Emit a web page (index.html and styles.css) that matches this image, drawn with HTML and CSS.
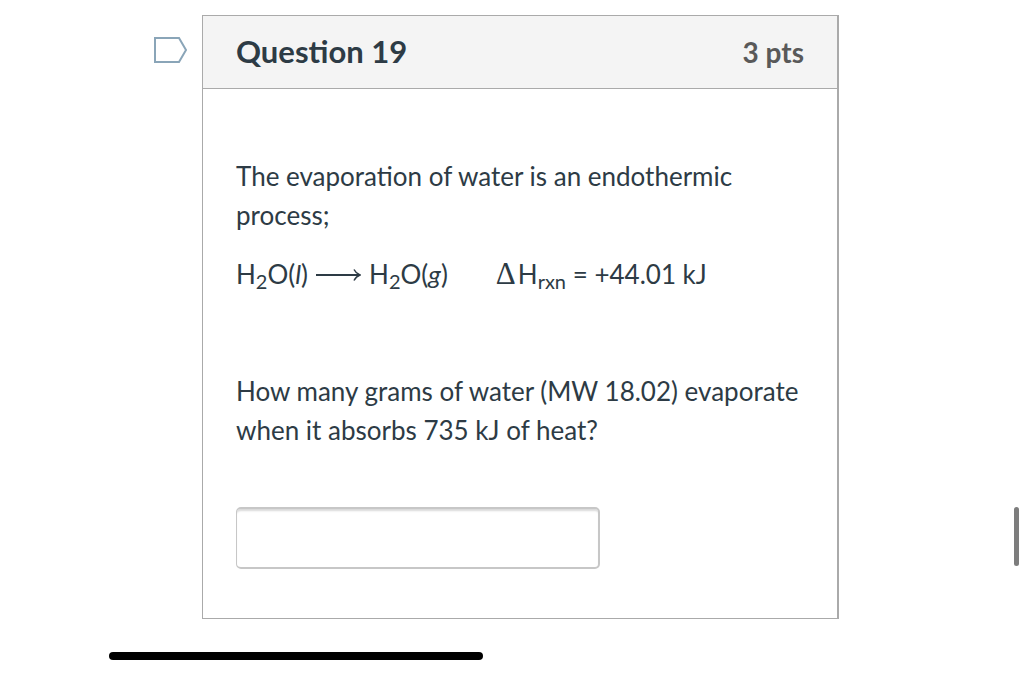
FILE: index.html
```html
<!DOCTYPE html>
<html lang="en">
<head>
  <meta charset="UTF-8" />
  <meta name="viewport" content="width=device-width, initial-scale=1" />
  <title>Question 19</title>
  <link rel="stylesheet" href="styles.css">
</head>
<body>

  <main class="quiz">
    <button class="flag" type="button" aria-label="Flag question">
      <svg width="34" height="28" viewBox="0 0 34 28" fill="none" stroke-width="2">
        <path d="M1 2H25L32 14L25 26H1Z" stroke="#8aa5b8" />
      </svg>
    </button>

    <section class="question">
      <header class="question-header">
        <h2 class="question-name">Question 19</h2>
        <span class="points">3 pts</span>
      </header>

      <div class="question-body">
        <p>The evaporation of water is an endothermic process;</p>
        <p class="equation">
          <span>H<sub>2</sub>O(<i>l</i>)</span>
          <svg class="arrow" width="45" height="14" viewBox="0 0 45 14" fill="none" stroke="#2d3b45">
            <path d="M0 7H43" stroke-width="2" />
            <path d="M38 1.5Q40 5.5 44 7Q40 8.5 38 12.5" stroke-width="1.5" />
          </svg>
          <span>H<sub>2</sub>O(<i>g</i>)</span>
          <span class="enthalpy"><span class="delta">Δ</span>H<sub>rxn</sub> = +44.01 kJ</span>
        </p>
        <p class="ask"><label for="answer">How many grams of water (MW 18.02) evaporate when it absorbs 735 kJ of heat?</label></p>
        <input class="answer" id="answer" type="text" />
      </div>
    </section>
  </main>

  <div class="home-bar"></div>
  <div class="scroll-thumb"></div>

</body>
</html>
```

FILE: styles.css
```css
* {
  box-sizing: border-box;
}

body {
  margin: 0;
  font-family: Lato, "Liberation Sans", sans-serif;
  font-size: 26px;
  line-height: 39px;
  color: #2d3b45;
  background: #fff;
}

.quiz {
  display: flex;
  align-items: flex-start;
  gap: 14px;
  padding: 15px 185px 0 154px;
}

.flag {
  flex: none;
  margin: 21px 0 0;
  padding: 0;
  border: none;
  background: none;
  cursor: pointer;
}

.flag svg {
  display: block;
}

.question {
  flex: 1;
  border: 1px solid #aaa;
  border-right-width: 2px;
}

.question-header {
  display: flex;
  align-items: baseline;
  justify-content: space-between;
  padding: 16px 33px;
  background: #f4f4f4;
  border-bottom: 1px solid #aaa;
}

.question-name {
  margin: 0;
  font-size: 31px;
  font-weight: bold;
}

.points {
  font-size: 28px;
  font-weight: bold;
  color: #595959;
}

.question-body {
  padding: 68px 33px 49px;
}

p {
  margin: 0 0 20px;
}

sub {
  font-size: 20px;
  line-height: 0;
  vertical-align: -5px;
}

.equation {
  display: flex;
  align-items: center;
  gap: 8px;
}

.enthalpy {
  margin-left: 40px;
}

.delta {
  margin-right: 2px;
  font-family: "Liberation Serif", serif;
  font-size: 31px;
  line-height: 0;
}

.ask {
  margin: 78px 0 57px;
}

.answer {
  display: block;
  width: 364px;
  max-width: 100%;
  height: 62px;
  padding: 8px 12px;
  font: inherit;
  color: inherit;
  border: 2px solid #c7c7c7;
  border-left-width: 1px;
  border-radius: 5px;
  box-shadow: inset 0 3px 2px -1px rgba(0, 0, 0, 0.15);
}

.home-bar {
  width: 374px;
  height: 8px;
  margin: 33px 0 0 109px;
  border-radius: 4px;
  background: #000;
}

/* scroll indicator floats over the page edge */
.scroll-thumb {
  position: fixed;
  top: 507px;
  right: 5px;
  width: 5px;
  height: 59px;
  border-radius: 3px;
  background: #7d7d7d;
}
```
